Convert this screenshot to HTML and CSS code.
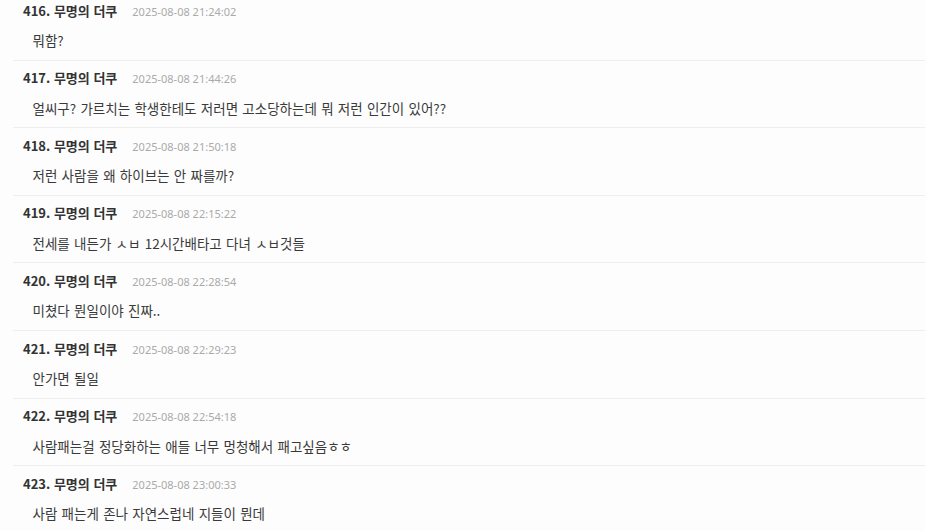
FILE: index.html
```html
<!DOCTYPE html>
<html lang="ko">
<head>
<meta charset="utf-8">
<link rel="stylesheet" href="styles.css">
</head>
<body>
<ul class="comments">
  <li class="comment"><div class="head"><span class="author">416. 무명의 더쿠</span><span class="date">2025-08-08 21:24:02</span></div><div class="body">뭐함?</div></li>
  <li class="comment"><div class="head"><span class="author">417. 무명의 더쿠</span><span class="date">2025-08-08 21:44:26</span></div><div class="body">얼씨구? 가르치는 학생한테도 저러면 고소당하는데 뭐 저런 인간이 있어??</div></li>
  <li class="comment"><div class="head"><span class="author">418. 무명의 더쿠</span><span class="date">2025-08-08 21:50:18</span></div><div class="body">저런 사람을 왜 하이브는 안 짜를까?</div></li>
  <li class="comment"><div class="head"><span class="author">419. 무명의 더쿠</span><span class="date">2025-08-08 22:15:22</span></div><div class="body">전세를 내든가 ㅅㅂ 12시간배타고 다녀 ㅅㅂ것들</div></li>
  <li class="comment"><div class="head"><span class="author">420. 무명의 더쿠</span><span class="date">2025-08-08 22:28:54</span></div><div class="body">미쳤다 뭔일이야 진짜..</div></li>
  <li class="comment"><div class="head"><span class="author">421. 무명의 더쿠</span><span class="date">2025-08-08 22:29:23</span></div><div class="body">안가면 될일</div></li>
  <li class="comment"><div class="head"><span class="author">422. 무명의 더쿠</span><span class="date">2025-08-08 22:54:18</span></div><div class="body">사람패는걸 정당화하는 애들 너무 멍청해서 패고싶음ㅎㅎ</div></li>
  <li class="comment"><div class="head"><span class="author">423. 무명의 더쿠</span><span class="date">2025-08-08 23:00:33</span></div><div class="body">사람 패는게 존나 자연스럽네 지들이 뭔데</div></li>
</ul>
</body>
</html>
```

FILE: styles.css
```css
html, body {
  margin: 0;
  padding: 0;
  background: #fdfdfd;
  font-family: "Noto Sans CJK KR", "Noto Sans", sans-serif;
  color: #333;
  overflow: hidden;
}
.comments {
  list-style: none;
  margin: -7px 0 0 13px;
  padding: 0;
}
.comment {
  border-bottom: 1px solid #eeeeee;
  padding: 7.6px 10px 9.5px;
}
.head {
  display: flex;
  align-items: baseline;
  gap: 15px;
  line-height: 20px;
  height: 20px;
}
.author {
  font-size: 13px;
  font-weight: 700;
  color: #333;
}
.date {
  font-family: "Noto Sans", "Open Sans", sans-serif;
  font-size: 11px;
  color: #aaa;
}
.body {
  margin: 9.5px 0 0 9.5px;
  font-size: 13.5px;
  word-spacing: 0.5px;
  line-height: 20px;
  color: #3a3a3a;
}
```
